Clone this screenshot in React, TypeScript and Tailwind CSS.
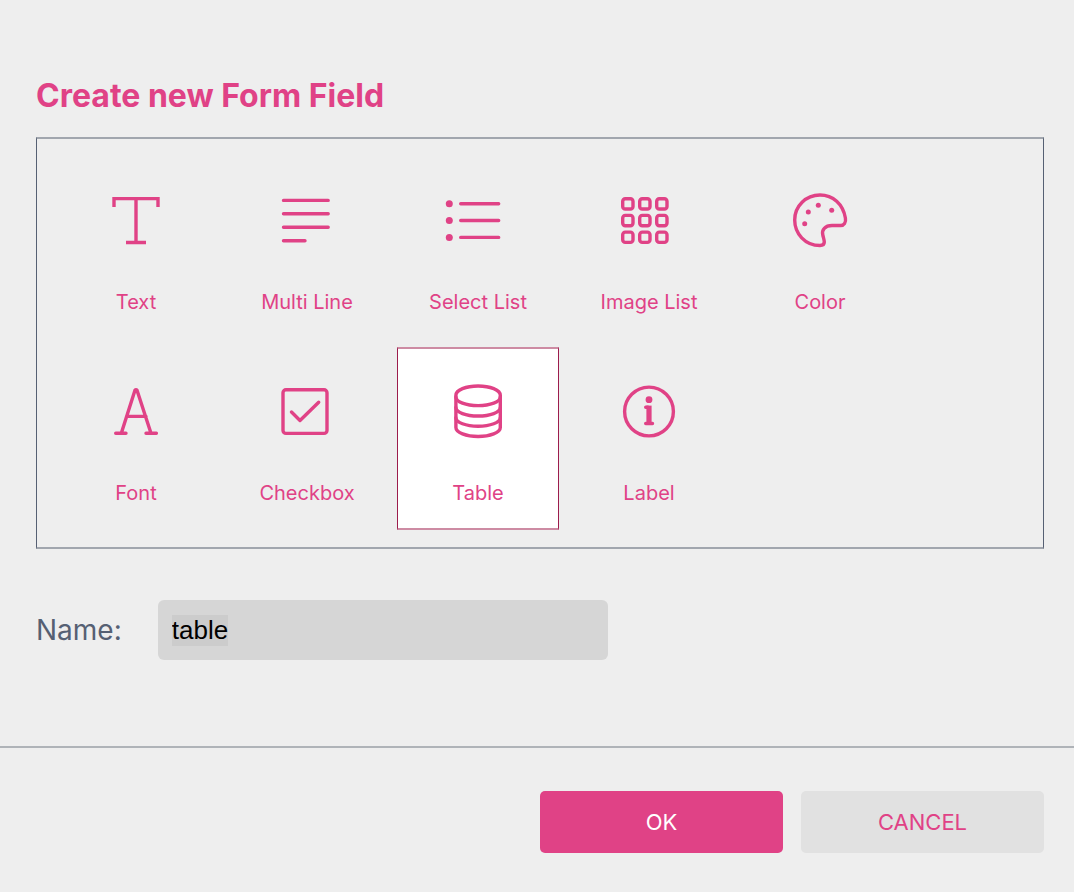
import { useEffect, useRef, useState } from 'react';
import type { ReactNode } from 'react';

interface FieldType {
  id: string;
  label: string;
  icon: ReactNode;
}

const GRID_X = [9.7, 26.7, 43.7];
const GRID_Y = [14.7, 31.4, 48.1];

const FIELD_TYPES: FieldType[] = [
  {
    id: 'text',
    label: 'Text',
    icon: (
      <path
        d="M14 23V14.6H58V23M36 14.6V58.5M26 58.5H46"
        strokeLinecap="butt"
        strokeLinejoin="miter"
      />
    ),
  },
  {
    id: 'multiline',
    label: 'Multi Line',
    icon: <path d="M12.5 16.4H57.2M12.5 29.8H57.2M12.5 43.3H57.2M12.5 56.7H34" />,
  },
  {
    id: 'select',
    label: 'Select List',
    icon: (
      <>
        <path d="M18.7 19.7H56.7M18.7 36.5H56.7M18.7 53.4H56.7" />
        <g fill="currentColor" stroke="none">
          <circle cx="7.3" cy="19.7" r="3.5" />
          <circle cx="7.3" cy="36.5" r="3.5" />
          <circle cx="7.3" cy="53.4" r="3.5" />
        </g>
      </>
    ),
  },
  {
    id: 'images',
    label: 'Image List',
    icon: GRID_Y.map((y) =>
      GRID_X.map((x) => <rect key={`${x}-${y}`} x={x} y={y} width="10.3" height="10.3" rx="2.6" />)
    ),
  },
  {
    id: 'color',
    label: 'Color',
    icon: (
      <>
        <path d="M36 61.5C21 61.5 10.7 49.5 10.7 36C10.7 22 22 11 36 11C49 11 59 20 61.4 34C62.2 38.5 60 41.5 56.5 41.5H48C41 41.5 37.5 46 38.8 51C39.5 54 40.3 56 40.3 58C40.3 60.5 38.5 61.5 36 61.5Z" />
        <g fill="currentColor" stroke="none">
          <circle cx="20.7" cy="39.7" r="2.5" />
          <circle cx="24.3" cy="28" r="2.5" />
          <circle cx="34.3" cy="21.3" r="2.5" />
          <circle cx="47.7" cy="26.3" r="2.5" />
        </g>
      </>
    ),
  },
  {
    id: 'font',
    label: 'Font',
    icon: <path d="M21.3 58.3L34.9 15.4Q36 14 37.1 15.4L51 58.3M26.5 41.4H46M15.7 58.3H26M46 58.3H56.4" />,
  },
  {
    id: 'checkbox',
    label: 'Checkbox',
    icon: (
      <>
        <rect x="12" y="14.7" width="44" height="43.7" rx="3" />
        <path d="M20.5 37L29 45.5L47.7 27.3" />
      </>
    ),
  },
  {
    id: 'table',
    label: 'Table',
    icon: (
      <>
        <path d="M13.9 20.3C13.9 15 24 11 36.1 11S58.3 15 58.3 20.3V52.5C58.3 57.5 48 61.5 36.1 61.5S13.9 57.5 13.9 52.5Z" />
        <path d="M13.9 22C13.9 27 24 30.6 36.1 30.6S58.3 27 58.3 22M13.9 32.5C13.9 37.3 24 41 36.1 41S58.3 37.3 58.3 32.5M13.9 42.7C13.9 47.5 24 51.2 36.1 51.2S58.3 47.5 58.3 42.7" />
      </>
    ),
  },
  {
    id: 'label',
    label: 'Label',
    icon: (
      <>
        <circle cx="36" cy="36.5" r="24.4" />
        <circle cx="36" cy="24.7" r="3.4" fill="currentColor" stroke="none" />
        <path d="M32.7 32.2H35M32.7 48.5H39.5" />
        <path d="M36 30.6V48.5" strokeWidth="5.2" strokeLinecap="butt" />
      </>
    ),
  },
];

export default function CreateFieldDialog() {
  const [selected, setSelected] = useState('table');
  const [name, setName] = useState('table');
  const nameRef = useRef<HTMLInputElement>(null);

  // the suggested name starts out selected so it can be typed over
  useEffect(() => {
    nameRef.current?.focus();
    nameRef.current?.select();
  }, []);

  return (
    <form
      className="min-h-screen bg-[#eeeeee] font-['Inter',sans-serif] text-[#e04286]"
      onSubmit={(e) => e.preventDefault()}
    >
      <div className="pt-[76px] pb-[86px] pl-9 pr-[30px]">
        <h1 className="text-[32px] leading-10 font-bold mb-[21px]">Create new Form Field</h1>

        <div className="flex flex-wrap gap-x-[9px] gap-y-2 px-[18px] py-[17px] border-x border-y-2 border-x-[#566073] border-y-[#a1a6ae]">
          {FIELD_TYPES.map((type) => (
            <button
              key={type.id}
              type="button"
              aria-pressed={selected === type.id}
              onClick={() => setSelected(type.id)}
              className={
                selected === type.id
                  ? 'w-[162px] h-[183px] flex flex-col items-center pt-[26px] border-x border-y-2 border-x-[#9c1c4c] border-y-[#cd8ba3] bg-white'
                  : 'w-[162px] h-[183px] flex flex-col items-center pt-[26px] border-x border-y-2 border-transparent'
              }
            >
              <svg
                viewBox="0 0 72 72"
                className="size-[72px]"
                fill="none"
                stroke="currentColor"
                strokeWidth="3.4"
                strokeLinecap="round"
                strokeLinejoin="round"
                aria-hidden="true"
              >
                {type.icon}
              </svg>
              <span className="mt-8 text-[20px] leading-7">{type.label}</span>
            </button>
          ))}
        </div>

        <div className="flex items-center gap-9 mt-[51px]">
          <label htmlFor="field-name" className="text-[28px] leading-10 text-[#566073]">
            Name:
          </label>
          <input
            id="field-name"
            ref={nameRef}
            type="text"
            value={name}
            onChange={(e) => setName(e.target.value)}
            className="w-[450px] h-[60px] px-3.5 rounded-md bg-[#d6d6d6] font-['Liberation_Sans',sans-serif] text-[26px] text-black outline-none selection:bg-[#cccccc] selection:text-black"
          />
        </div>
      </div>

      <div className="flex justify-end gap-[18px] pt-[43px] pb-9 pr-[30px] border-t-2 border-[#afb3b8]">
        <button type="submit" className="w-[243px] h-[62px] rounded-[5px] bg-[#e04286] text-[22px] text-white">
          OK
        </button>
        <button type="button" className="w-[243px] h-[62px] rounded-[5px] bg-[#e1e1e1] text-[22px]">
          CANCEL
        </button>
      </div>
    </form>
  );
}
